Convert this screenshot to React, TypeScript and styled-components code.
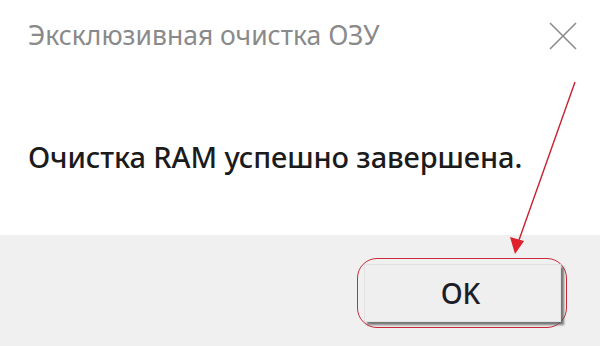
import React from 'react';
import styled, {createGlobalStyle} from 'styled-components';

const GlobalStyle = createGlobalStyle`
  html, body {
    margin: 0;
    padding: 0;
    background: #ffffff;
  }
  * {
    box-sizing: border-box;
  }
`;

export default function App() {
    return (
        <>
            <GlobalStyle/>
            <Dialog>
                <Body>
                    <TitleBar>
                        <Title>Эксклюзивная очистка ОЗУ</Title>
                        <CloseButton aria-label="close">
                            <svg width="30" height="30" viewBox="0 0 30 30">
                                <path d="M2 2 L28 28 M28 2 L2 28" stroke="#8c8c8c" strokeWidth="1.6" fill="none"/>
                            </svg>
                        </CloseButton>
                    </TitleBar>
                    <Message>Очистка RAM успешно завершена.</Message>
                </Body>

                <Footer>
                    <Highlight>
                        <OkButton>OK</OkButton>
                    </Highlight>
                </Footer>

                <Arrow width="600" height="346" viewBox="0 0 600 346">
                    <line x1="575" y1="82" x2="519" y2="240" stroke="#c8202e" strokeWidth="1.4"/>
                    <polygon points="515,254 510,237 524,241" fill="#e0202c"/>
                </Arrow>
            </Dialog>
        </>
    );
}

const Dialog = styled.div`
  position: relative;
  width: 600px;
  height: 346px;
  display: flex;
  flex-direction: column;
  background: #ffffff;
  font-family: "Noto Sans", "Open Sans", sans-serif;
  overflow: hidden;
`;

const Body = styled.div`
  height: 235px;
  padding: 17px 22px 0 28px;
  display: flex;
  flex-direction: column;
`;

const TitleBar = styled.div`
  display: flex;
  align-items: center;
  justify-content: space-between;
`;

const Title = styled.div`
  font-size: 26.5px;
  line-height: 36px;
  color: #8a8a8a;
`;

const CloseButton = styled.div`
  width: 30px;
  height: 30px;
  margin-top: 2px;
  display: flex;
`;

const Message = styled.div`
  margin-top: 86px;
  font-size: 29px;
  line-height: 36px;
  color: #1b1b1b;
  font-weight: 500;
  letter-spacing: -0.1px;
`;

const Footer = styled.div`
  flex: 1;
  background: #f0f0f0;
  display: flex;
  justify-content: flex-end;
  align-items: flex-start;
  padding: 23px 33px 0 0;
`;

const Highlight = styled.div`
  padding: 5px 5px 5px 6px;
  border: 1.5px solid #cc2a3a;
  border-radius: 20px;
`;

const OkButton = styled.div`
  width: 197px;
  height: 58px;
  display: flex;
  align-items: center;
  justify-content: center;
  background: #efefef;
  border: 1px solid #e2e2e2;
  box-shadow: 3px 3px 2px rgba(80, 80, 80, 0.75);
  font-size: 28px;
  font-weight: 500;
  color: #1d1d2a;
  padding-right: 4px;
`;

const Arrow = styled.svg`
  position: absolute;
  left: 0;
  top: 0;
  pointer-events: none;
`;
